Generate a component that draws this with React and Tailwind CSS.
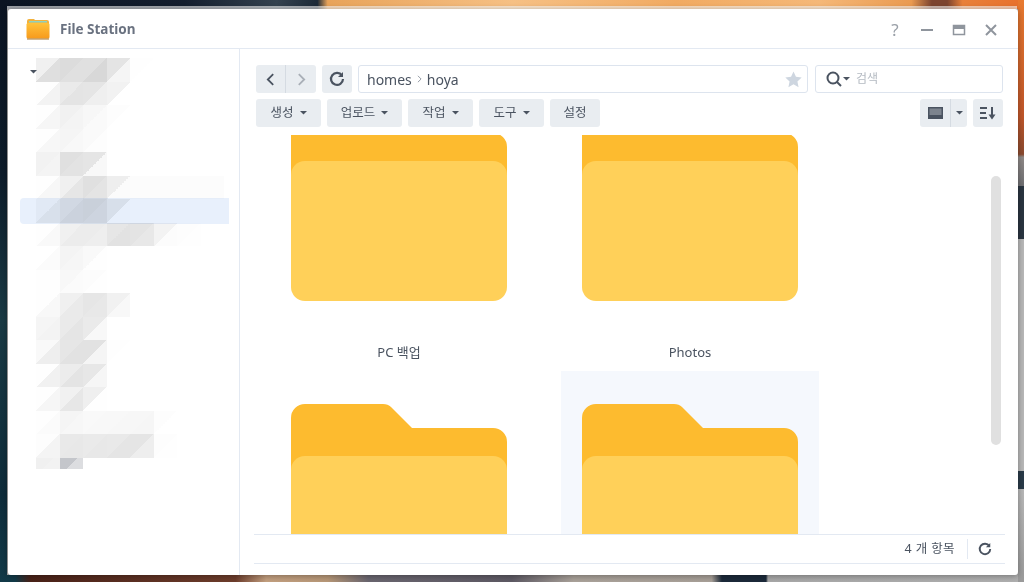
// two grey levels per cell: upper-left triangle, lower-right triangle
const mosaic = [
  ['f0df', 'dce0', 'e0d8', 'e4f5', 'feff'],
  ['fef3', 'eae4', 'e5ef', 'f2ff'],
  ['fef6', 'f1f4', 'f7fa', 'fdff'],
  ['fef7', 'f5f8', 'fafd', 'ffff'],
  ['f2f4', 'e0e3', 'e5f8', 'ffff'],
  ['fef7', 'f0e6', 'e0e4', 'eefb', 'fcfc', 'fcfc', 'fcfc', 'fcfc'],
  ['f8ee', 'e6e0', 'dde2', 'edfe', 'ffff'],
  ['fef9', 'f0ec', 'ecee', 'e6e2', 'e4e8', 'f3fc', 'fdfe'],
  ['fffb', 'f4f6', 'f9fe', 'ffff'],
  ['fefe', 'f8fb', 'fcfe', 'ffff'],
  ['fef8', 'f0ea', 'e6e8', 'f1f8'],
  ['f5f3', 'eae5', 'eaf8', 'ffff'],
  ['f9ee', 'e6e2', 'e2f5', 'feff'],
  ['fef1', 'ece4', 'e7f6', 'ffff'],
  ['fef6', 'f1e7', 'effe', 'ffff'],
  ['fefb', 'f5f7', 'f9f8', 'f8f7', 'f7f6', 'fdff'],
  ['fdf4', 'e9e8', 'eae8', 'e9e5', 'e5ee', 'fdfe'],
]

const grey = (hex) => `#${hex}${hex}${hex}`

function MosaicCell({ cell }) {
  const a = grey(cell.slice(0, 2))
  const b = grey(cell.slice(2, 4))
  return <div className="w-[23.5px] h-full" style={{ background: `linear-gradient(135deg, ${a} 50%, ${b} 50%)` }} />
}

function Caret({ className = '' }) {
  return (
    <svg viewBox="0 0 8 4" className={`w-[7px] h-[3.5px] fill-[#4a5360] ${className}`}>
      <path d="M0 0h8L4 4z" />
    </svg>
  )
}

function ToolButton({ label, width, caret = true }) {
  return (
    <div className={`h-7 ${width} flex items-center justify-center gap-1.5 rounded-[3px] bg-[#e9edf1] text-[12.5px] text-[#4a5360]`}>
      <span className="pt-px">{label}</span>
      {caret && <Caret />}
    </div>
  )
}

function Refresh({ size = 16 }) {
  return (
    <svg viewBox="0 0 16 16" width={size} height={size} fill="none" stroke="#4a5360" strokeWidth="2.2">
      <path d="M13 4.6A6 6 0 1 0 14 8" />
      <path d="M14 1v5h-5z" fill="#4a5360" stroke="none" />
    </svg>
  )
}

function Folder({ label, selected = false }) {
  return (
    <div className={`w-[258px] h-[295px] shrink-0 flex flex-col items-center ${selected ? 'bg-[#f5f8fd]' : ''}`}>
      <svg viewBox="0 0 216 192" width="216" height="192" className="mt-[33px] shrink-0">
        <path d="M0 14a14 14 0 0 1 14-14H92q5 0 8 3L121 24H202a14 14 0 0 1 14 14V100H0z" fill="#fdbb2f" />
        <path d="M0 66a14 14 0 0 1 14-14H202a14 14 0 0 1 14 14V178a14 14 0 0 1-14 14H14a14 14 0 0 1-14-14z" fill="#ffd059" />
      </svg>
      {label && <div className="mt-[41px] h-[20px] leading-[20px] text-[13px] text-[#4a5360]">{label}</div>}
    </div>
  )
}

export default function App() {
  return (
    <div
      className="relative w-[1024px] h-[582px] overflow-hidden bg-[#a8a8a8]"
      style={{ fontFamily: '"Noto Sans", "Noto Sans CJK KR", sans-serif' }}
    >
      {/* wallpaper peeking round the window */}
      <div className="absolute left-0 right-0 top-0 h-[9px] bg-[linear-gradient(90deg,#0b1422_0%,#141e2e_18%,#34424f_27%,#1c2a38_31%,#e8a35a_32%,#f6c084_50%,#f1aa62_66%,#f5b878_80%,#ea9a50_89%,#7c4430_91%,#7c4430_92.500%,#e8803a_94%,#e8702c_100%)]" />
      <div className="absolute left-0 right-0 bottom-0 h-[7px] bg-[linear-gradient(90deg,#123a48_0%,#123a48_1.500%,#4a2218_3%,#6e3d2c_23%,#c4a080_26%,#b89878_32%,#6a6670_36%,#5e5a64_50%,#aaa29a_56%,#a8a098_69.500%,#1c2a3a_70.500%,#1c2a3a_74.800%,#a8a8a8_75%,#b0b0b0_100%)]" />
      <div className="absolute left-0 top-0 bottom-0 w-[7px] bg-[linear-gradient(180deg,#0b1422_0%,#0d1c2a_30%,#1a3a44_55%,#0e2c3a_85%,#123a48_100%)]" />
      <div className="absolute right-0 top-0 bottom-0 w-[6px] bg-[linear-gradient(180deg,#e87a30_0%,#c0562a_20%,#8a4a30_26.500%,#8f8a88_27%,#6f6f72_32%,#2a3540_32%,#2a3540_41%,#b8b8b8_41%,#b8b8b8_81%,#2a3a48_81%,#2a3a48_84%,#b8b8b8_84%,#9a9a9a_100%)]" />
      <div className="absolute left-[7px] top-[6px] w-[1010px] h-[3px] bg-white/60" />

      {/* window */}
      <div className="absolute left-[8px] top-[9px] w-[1010px] h-[566px] bg-white rounded-[3px] flex flex-col shadow-[0_1px_6px_rgba(0,0,0,0.35)]">
        <div className="h-[40px] shrink-0 border-b border-[#e3e9f2] flex items-center pl-[18px] pr-[20px]">
          <svg viewBox="0 0 24 22" width="24" height="22">
            <defs>
              <linearGradient id="folderBody" x1="0" y1="0" x2="0" y2="1">
                <stop offset="0" stopColor="#ffc23a" />
                <stop offset="1" stopColor="#f79a1c" />
              </linearGradient>
            </defs>
            <path d="M1 3a2 2 0 0 1 2-2h5l1 1h12a2 2 0 0 1 2 2v4H1z" fill="#f2b13c" />
            <rect x="3" y="3" width="18" height="1.500" fill="#8fd3c0" />
            <rect x="0.5" y="5" width="23" height="15.500" rx="1.500" fill="url(#folderBody)" />
            <rect x="1" y="20.500" width="22" height="1" fill="#a8742a" />
          </svg>
          <div className="ml-[10px] pt-[2px] text-[13.5px] font-bold text-[#6a7280]">File Station</div>
          <div className="ml-auto pt-[2px] flex items-center gap-[18px]">
            <span className="w-[14px] text-center text-[17px] leading-none text-[#9aa0a8]">?</span>
            <svg viewBox="0 0 14 14" width="14" height="14"><path d="M1 7h12" stroke="#8f959d" strokeWidth="2" /></svg>
            <svg viewBox="0 0 14 14" width="14" height="14" fill="none"><rect x="1.500" y="2.500" width="11" height="9" stroke="#8f959d" strokeWidth="1.500" /><path d="M1.500 4.500h11" stroke="#8f959d" strokeWidth="3" /></svg>
            <svg viewBox="0 0 14 14" width="14" height="14"><path d="M2 2l10 10M12 2L2 12" stroke="#8f959d" strokeWidth="2" /></svg>
          </div>
        </div>

        <div className="flex-1 flex min-h-0">
          {/* sidebar tree, pixelated in the screenshot */}
          <div className="relative w-[232px] shrink-0 border-r border-[#e3e9f2] pt-[9px] pl-[28px]">
            {mosaic.map((cells, i) => (
              <div key={i} className="flex h-[23.5px]">
                {cells.map((cell, j) => <MosaicCell key={j} cell={cell} />)}
              </div>
            ))}
            <div className="flex h-[11px]">
              <MosaicCell cell="f0f2" />
              <div className="w-[23.5px] h-full bg-[linear-gradient(135deg,#c4c6cb_50%,#dcdde0_50%)]" />
            </div>
            <div className="absolute left-[12px] top-[149px] w-[209px] h-[26px] rounded-l-[4px] bg-[#e8f0fc] mix-blend-multiply" />
            <Caret className="absolute left-[22px] top-[21px]" />
          </div>

          {/* main */}
          <div className="flex-1 min-w-0 flex flex-col">
            <div className="pt-[16px] pl-[16px] pr-[15px] flex flex-col gap-[6px]">
              <div className="flex gap-[6px]">
                <div className="h-7 w-[60px] flex rounded-[3px] bg-[#e9edf1]">
                  <div className="w-[30px] flex items-center justify-center border-r border-[#d5dbe2]">
                    <svg viewBox="0 0 10 14" width="9" height="13" fill="none" stroke="#4a5360" strokeWidth="2"><path d="M8 1L2 7l6 6" /></svg>
                  </div>
                  <div className="flex-1 flex items-center justify-center">
                    <svg viewBox="0 0 10 14" width="9" height="13" fill="none" stroke="#a9afb7" strokeWidth="2"><path d="M2 1l6 6-6 6" /></svg>
                  </div>
                </div>
                <div className="h-7 w-[30px] flex items-center justify-center rounded-[3px] bg-[#e9edf1]">
                  <Refresh />
                </div>
                <div className="h-7 w-[450px] flex items-center pl-[8px] pr-[5px] rounded-[3px] border border-[#dde4ee] text-[14px] text-[#4a5360]">
                  <span>homes</span>
                  <svg viewBox="0 0 6 10" width="5" height="8" fill="none" stroke="#7c8490" strokeWidth="1" className="mx-[5px]"><path d="M1 1l4 4-4 4" /></svg>
                  <span>hoya</span>
                  <svg viewBox="0 0 16 16" width="17" height="17" className="ml-auto fill-[#ced6e0]"><path d="M8 0.5l2.300 5 5.400.6-4 3.700 1.100 5.400L8 12.500l-4.800 2.700 1.100-5.400-4-3.700 5.400-.6z" /></svg>
                </div>
                <div className="h-7 ml-[1px] w-[188px] flex items-center pl-[10px] rounded-[3px] border border-[#dde4ee]">
                  <svg viewBox="0 0 16 16" width="16" height="16" fill="none" stroke="#4a5360" strokeWidth="2"><circle cx="7" cy="7" r="5.500" /><path d="M11 11l4 4" /></svg>
                  <Caret className="ml-[1px]" />
                  <span className="ml-[6px] text-[12px] text-[#b4bac2]">검색</span>
                </div>
              </div>
              <div className="flex gap-[6px]">
                <ToolButton label="생성" width="w-[65px]" />
                <ToolButton label="업로드" width="w-[75px]" />
                <ToolButton label="작업" width="w-[65px]" />
                <ToolButton label="도구" width="w-[65px]" />
                <ToolButton label="설정" width="w-[50px]" caret={false} />
                <div className="ml-auto h-7 w-[47px] flex rounded-[3px] bg-[#e9edf1]">
                  <div className="w-[31px] flex items-center justify-center border-r border-[#d5dbe2]">
                    <svg viewBox="0 0 15 12" width="15" height="12"><rect width="15" height="12" fill="#4a5360" /><rect x="1.500" y="1.500" width="12" height="6.500" fill="#7d848e" /></svg>
                  </div>
                  <div className="flex-1 flex items-center justify-center"><Caret /></div>
                </div>
                <div className="h-7 w-[30px] flex items-center justify-center rounded-[3px] bg-[#e9edf1]">
                  <svg viewBox="0 0 16 14" width="16" height="14" stroke="#4a5360" strokeWidth="2" fill="none"><path d="M0 2h7M0 7h6M0 12h7M12 1v9" /><path d="M8.500 8.500h7L12 13.500z" fill="#4a5360" stroke="none" /></svg>
                </div>
              </div>
            </div>

            <div className="relative flex-1 min-h-0 mt-[8px] overflow-hidden">
              <div className="-mt-[59px] pl-[30px] grid grid-cols-[258px_258px] gap-x-[33px]">
                <Folder label="PC 백업" />
                <Folder label="Photos" />
                <Folder />
                <Folder selected />
              </div>
              <div className="absolute right-[17px] top-[41px] w-[10px] h-[269px] rounded-full bg-[#e0e0e0]" />
            </div>

            <div className="h-[30px] shrink-0 ml-[14px] mr-[13px] mb-[11px] border-y border-[#e3e9f2] flex items-center justify-end pr-[13px]">
              <span className="text-[12.5px] text-[#4a5360] tracking-[0.4px]">4 개 항목</span>
              <div className="ml-[12px] mr-[10px] h-[20px] border-l border-[#e3e9f2]" />
              <Refresh size={14} />
            </div>
          </div>
        </div>
      </div>
    </div>
  )
}
